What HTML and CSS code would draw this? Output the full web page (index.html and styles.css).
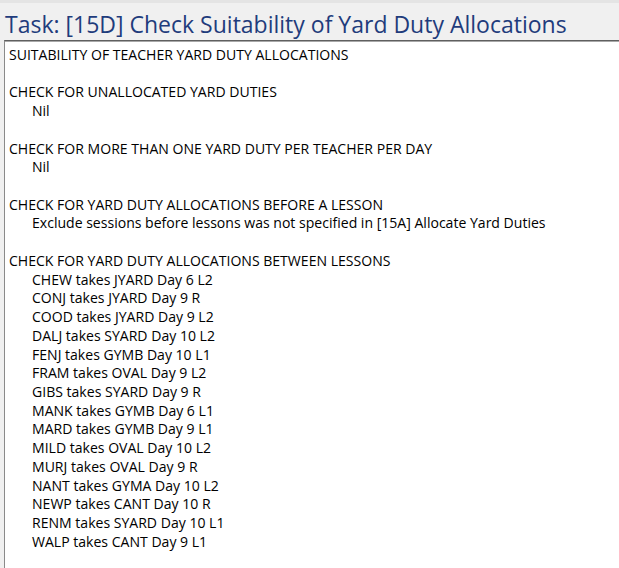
FILE: index.html
```html
<!DOCTYPE html>
<html>
<head>
<meta charset="utf-8">
<link rel="stylesheet" href="styles.css">
</head>
<body>
<div class="window">
  <div class="title-bar">
    <h1 class="title">Task: [15D] Check Suitability of Yard Duty Allocations</h1>
  </div>
  <div class="report">
    <div class="line">SUITABILITY OF TEACHER YARD DUTY ALLOCATIONS</div>
    <div class="line blank"></div>
    <div class="line">CHECK FOR UNALLOCATED YARD DUTIES</div>
    <div class="line item">Nil</div>
    <div class="line blank"></div>
    <div class="line">CHECK FOR MORE THAN ONE YARD DUTY PER TEACHER PER DAY</div>
    <div class="line item">Nil</div>
    <div class="line blank"></div>
    <div class="line">CHECK FOR YARD DUTY ALLOCATIONS BEFORE A LESSON</div>
    <div class="line item">Exclude sessions before lessons was not specified in [15A] Allocate Yard Duties</div>
    <div class="line blank"></div>
    <div class="line">CHECK FOR YARD DUTY ALLOCATIONS BETWEEN LESSONS</div>
    <div class="line item">CHEW takes JYARD Day 6 L2</div>
    <div class="line item">CONJ takes JYARD Day 9 R</div>
    <div class="line item">COOD takes JYARD Day 9 L2</div>
    <div class="line item">DALJ takes SYARD Day 10 L2</div>
    <div class="line item">FENJ takes GYMB Day 10 L1</div>
    <div class="line item">FRAM takes OVAL Day 9 L2</div>
    <div class="line item">GIBS takes SYARD Day 9 R</div>
    <div class="line item">MANK takes GYMB Day 6 L1</div>
    <div class="line item">MARD takes GYMB Day 9 L1</div>
    <div class="line item">MILD takes OVAL Day 10 L2</div>
    <div class="line item">MURJ takes OVAL Day 9 R</div>
    <div class="line item">NANT takes GYMA Day 10 L2</div>
    <div class="line item">NEWP takes CANT Day 10 R</div>
    <div class="line item">RENM takes SYARD Day 10 L1</div>
    <div class="line item">WALP takes CANT Day 9 L1</div>
  </div>
</div>
</body>
</html>
```

FILE: styles.css
```css
html, body {
  margin: 0;
  padding: 0;
  background: #f0f0f0;
  height: 100%;
  overflow: hidden;
}
.window {
  display: flex;
  flex-direction: column;
  height: 568px;
  border-top: 3px solid #e4e4e4;
  box-sizing: border-box;
}
.title-bar {
  height: 37px;
  padding-left: 5px;
  display: flex;
  align-items: flex-end;
  flex: none;
}
.title {
  margin: 0 0 2px 0;
  font-family: "Open Sans", "Noto Sans", sans-serif;
  font-weight: 400;
  font-size: 23px;
  line-height: 28px;
  color: #1f3c7c;
  white-space: nowrap;
}
.report {
  flex: 1;
  margin-left: 4px;
  background: #ffffff;
  border-top: 1px solid #5f5f5f;
  border-left: 1px solid #8a8a8a;
  box-shadow: inset 0 1px 0 #a8a8a8;
  padding: 5px 0 0 4px;
  font-family: "Open Sans", "Noto Sans", sans-serif;
  font-size: 14.05px;
  color: #000;
}
.line {
  height: 18.72px;
  line-height: 18.72px;
  white-space: nowrap;
}
.item {
  padding-left: 23px;
}
```
